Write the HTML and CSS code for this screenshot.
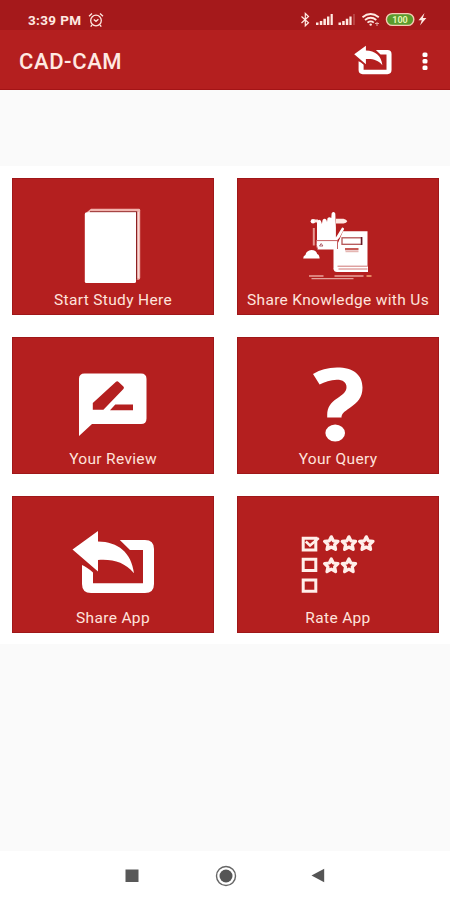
FILE: index.html
```html
<!DOCTYPE html>
<html lang="en">
<head>
<meta charset="utf-8">
<title>CAD-CAM</title>
<link rel="stylesheet" href="styles.css">
</head>
<body>
<div class="screen">
  <header>
    <div class="status">
      <span class="time">3:39 PM</span>
      <svg class="alarm" width="16" height="16" viewBox="0 0 16 16" fill="none" stroke="currentColor" stroke-width="1.3"><circle cx="8" cy="8.5" r="5.3"/><path d="M5.8 7.5L8 9.3l2.4-2M1 4.2L4 1.5M15 4.2L12 1.5M4 13l-1.3 1.6M12 13l1.3 1.6"/></svg>
      <svg class="indicators" width="130" height="20" viewBox="298 10 130 20">
        <path d="M301.5 16.5l7 6.3-3.2 3V13.5l3.2 3-7 6.5" fill="none" stroke="currentColor" stroke-width="1.2"/>
        <path d="M316 22.5h2.5V25H316zM319.8 21h2.5v4h-2.5zM323.4 18.8h2.5V25h-2.5zM327 16.5h2.4V25H327zM330.6 14h2.2v11h-2.2z" fill="currentColor"/>
        <path d="M338.5 22.5h2.5V25h-2.5zM342.2 21h2.5v4h-2.5zM345.8 18.8h2.5V25h-2.5zM349.4 16.5h2.2V25h-2.2z" fill="currentColor"/>
        <path d="M354 14v11" stroke="currentColor" opacity=".4"/>
        <g fill="none" stroke="currentColor" stroke-width="1.8"><path d="M362.5 17.2q8-6.4 16.3 0M365 20q5.7-4.5 11.3 0M367.5 22.6q3.2-2.4 6.3 0"/></g>
        <circle cx="370.7" cy="24.6" r="1.2" fill="currentColor"/><path d="M375 23.5h4M377 22v4" stroke="currentColor" opacity=".7"/>
        <rect x="386.4" y="13.6" width="27.4" height="11.8" rx="5.9" fill="#599b2d" stroke="#f6c9b4" stroke-width="1.4"/>
        <text x="400" y="23" class="battery">100</text>
        <path d="M424.5 13l-6 7.2h3.3l-1.8 5.3 6.4-7.6h-3.5z" fill="currentColor"/>
      </svg>
    </div>
    <div class="appbar">
      <h1>CAD-CAM</h1>
      <svg class="share" width="38" height="30" viewBox="72 530 83 64"><use href="#share"/></svg>
      <svg class="more" width="6" height="20" viewBox="0 0 6 20" fill="currentColor"><rect x=".5" y="1.5" width="5" height="4.4" rx="1.5"/><rect x=".5" y="8" width="5" height="4.4" rx="1.5"/><rect x=".5" y="14.5" width="5" height="4.4" rx="1.5"/></svg>
    </div>
  </header>
  <main>
    <div class="tile">
      <svg viewBox="12 178 202 113"><path d="M87 212l4-3.2h47.8q1.4 0 1.4 1.4v67.5q0 1.3-1.4 2h-2.3" fill="#f1b4ae"/><path d="M90 211.8h46.6v68" fill="none" stroke="#8d2022" stroke-width="1.2"/><path d="M138.2 212v66" stroke="#fff" stroke-width=".7"/><path d="M84.8 214q0-1.8 2-1.8H136v69.2q0 1.7-1.7 1.7H86.5q-1.7 0-1.7-1.7z" fill="#fff"/></svg>
      <span>Start Study Here</span>
    </div>
    <div class="tile">
      <svg viewBox="237 178 202 113">
        <path d="M313.8 228v17.5" stroke="#e79b94" stroke-width="2"/>
        <circle cx="313" cy="221.2" r="2.3" fill="#fff"/><path d="M336 218.8h7.5q3 .6 3.8 2.4-.8 1.8-3.8 2.4H336zM314 219.6h4v3h-4z" fill="#ffe8e2"/>
        <path d="M343 231.3h24.5V269h-34v-23l4-2z" fill="#fff"/>
        <rect x="342" y="237.8" width="19.5" height="6.5" fill="#fff" stroke="#b45455" stroke-width="1.3"/><path d="M361.6 237v8" stroke="#651a25" stroke-width="1.5"/>
        <rect x="345" y="248" width="13.5" height="2.3" fill="#c65b57"/><path d="M345.5 251.7h13" stroke="#dfa6a0"/>
        <path d="M368 266.5h-31q-3.3.4-3.3 2.8t3.3 2.8H368z" fill="#fff"/><path d="M367.5 266.2h-30M338.5 269h29" fill="none" stroke="#cb6764" stroke-width=".9"/>
        <path d="M317 241v-18.5q.3-2.8 2.2-2.8t2.3 2.8l.4 1.5.7-4q2-2.5 3.9 0l.5 2 .5-3.8q1.8-2 3.8-.2l.3-4.6q1.8-2.8 3.7 0l.6 14v10l6.2-9.8q1.7-.2 2 1.5l-4.5 8.5-3.6 3.8z" fill="#fff"/>
        <path d="M316.5 240.6h21v8.8h-20q-2-4.4-1-8.8z" fill="#fff"/><path d="M316.5 240.6h21v8.4M316.5 240.6q-1 4.4 1 8.4" fill="none" stroke="#c55f60"/><path d="M319.5 246l1.7-2.5 1.7 2.5z" fill="none" stroke="#a84e59" stroke-width=".9"/>
        <path d="M303.2 258.6q-.1-2.6 2.2-3.6 1.2-4.6 6-4.9 4.8.2 5.8 4 2.6 1 2.4 4.5z" fill="#fff"/>
        <path d="M309 276h14.5M334.5 276h29" stroke="#e9a39b" stroke-width="1.7"/><path d="M311.5 278.7h42" stroke="#e2a19a" stroke-width="1.3"/><path d="M366.5 276h5" stroke="#e78661" stroke-width="2"/>
      </svg>
      <span>Share Knowledge with Us</span>
    </div>
    <div class="tile">
      <svg viewBox="12 337 202 113"><path d="M79 436v-57q0-5.5 5.5-5.5H141q5.5 0 5.5 5.5v39.5q0 5.5-5.5 5.5H92z" fill="#fff"/><path d="M92.8 409.8V403L116 381.8q1.3-1 2.6.2l4.8 4.4q1.2 1.3 0 2.6l-20 20.8zM110 410.3l5.3-5.7H133v5.7z" fill="#b41f1f"/></svg>
      <span>Your Review</span>
    </div>
    <div class="tile">
      <svg viewBox="237 337 202 113" fill="#fff"><path d="M313 374Q323 367.5 337 367.5c16.5 0 25.5 7.5 25.5 20 0 10-5 15-12.5 20.2-6.5 4.4-8.5 6.3-8.5 9.8h-14.3v-2.5c0-8 3.5-12.3 9.8-16.6 6.2-4.2 9.5-6.7 9.5-11.4 0-4.5-3.5-7.2-9.7-7.2-6.5 0-12 2.2-17.2 4.8z"/><ellipse cx="335.2" cy="433" rx="9.8" ry="8.6"/></svg>
      <span>Your Query</span>
    </div>
    <div class="tile">
      <svg viewBox="12 496 202 113"><g id="share" fill="#fff"><path d="M72.5 549.5L98 531v10.5c20 .3 33.5 11 36 31.8-9.5-11-20.3-14.3-36-13.3v11.5z"/><path d="M119.8 540H145q9 0 9 9v35q0 9-9 9H91q-9 0-9-9v-19q5 2 11 7.5v10.8h50V550h-13z"/></g></svg>
      <span>Share App</span>
    </div>
    <div class="tile">
      <svg viewBox="237 496 202 113">
        <g fill="none" stroke="#ffefea" stroke-width="3"><path d="M303.2 538.3h12.6v11.6h-12.6zM303.2 559.2h12.6v11.3h-12.6zM303.2 580h12.6v11.3h-12.6z"/><path d="M305.8 541.5l4.2 4 8.8-7.5" stroke-width="2.5"/>
        <g stroke-width="3.2" stroke-linejoin="round"><path id="star" d="M331.3 536.8l2 4 4.7.6-3.4 3.2 1 4.8-4.3-2.4-4.3 2.4 1-4.8-3.4-3.2 4.7-.6z"/><use href="#star" x="17.6"/><use href="#star" x="35"/><use href="#star" y="22.2"/><use href="#star" x="17.6" y="22.2"/></g></g>
      </svg>
      <span>Rate App</span>
    </div>
  </main>
  <nav>
    <svg width="14" height="14" viewBox="0 0 14 14"><rect x=".5" y=".5" width="13" height="12.5" fill="#585858"/></svg>
    <svg width="22" height="22" viewBox="0 0 22 22"><circle cx="11" cy="11" r="9.5" fill="none" stroke="#666" stroke-width="1.4"/><circle cx="11" cy="11" r="6.5" fill="#555"/></svg>
    <svg width="14" height="15" viewBox="0 0 14 15"><path d="M.5 7.5L13.2.8v13.4z" fill="#555"/></svg>
  </nav>
</div>
</body>
</html>
```
FILE: styles.css
```css
* { box-sizing: border-box; }
body { margin: 0; font-family: Roboto, "Liberation Sans", sans-serif; }
.screen { width: 450px; height: 900px; display: flex; flex-direction: column; background: #fafafa; }
svg { display: block; flex: none; }
header { height: 90px; color: #ffe9e2; border-bottom: 1px solid #a31416; background: #b41f1f; }
.status { height: 30px; padding: 10px 22px 0 28px; display: flex; background: #a5191b; }
.time { width: 54px; font-size: 13.5px; line-height: 20px; font-weight: 700; letter-spacing: .35px; white-space: nowrap; }
.alarm { margin: 2px 0 0 6px; }
.indicators { margin-left: auto; }
.battery { font-size: 9px; font-weight: 700; text-anchor: middle; fill: #e5f5b0; }
.appbar { height: 59px; padding: 0 22px 0 19px; display: flex; align-items: center; }
h1 { margin: 5px 0 0; font-size: 22px; line-height: 26px; font-weight: 500; letter-spacing: .6px; }
.share { margin: 0 30px 0 auto; }
.more { margin-top: 3px; color: #fff; }
main { height: 478px; margin-top: 76px; padding: 12px 11px 12px 12px; display: grid; grid-template-columns: repeat(2, 202px); grid-auto-rows: 137px; gap: 22px 23px; background: #fff; }
.tile { background: #b41f1f; border: 1px solid #9f1719; display: flex; flex-direction: column; align-items: center; color: #ffe3dc; }
.tile svg { width: 202px; height: 113px; margin: -1px -1px 0; }
.tile span { font-size: 15.5px; line-height: 18px; letter-spacing: .33px; white-space: nowrap; }
nav { height: 49px; margin-top: auto; padding-left: 125px; display: flex; align-items: center; background: #fff; }
nav svg:nth-child(2) { margin: 0 74px 0 76px; }
```
